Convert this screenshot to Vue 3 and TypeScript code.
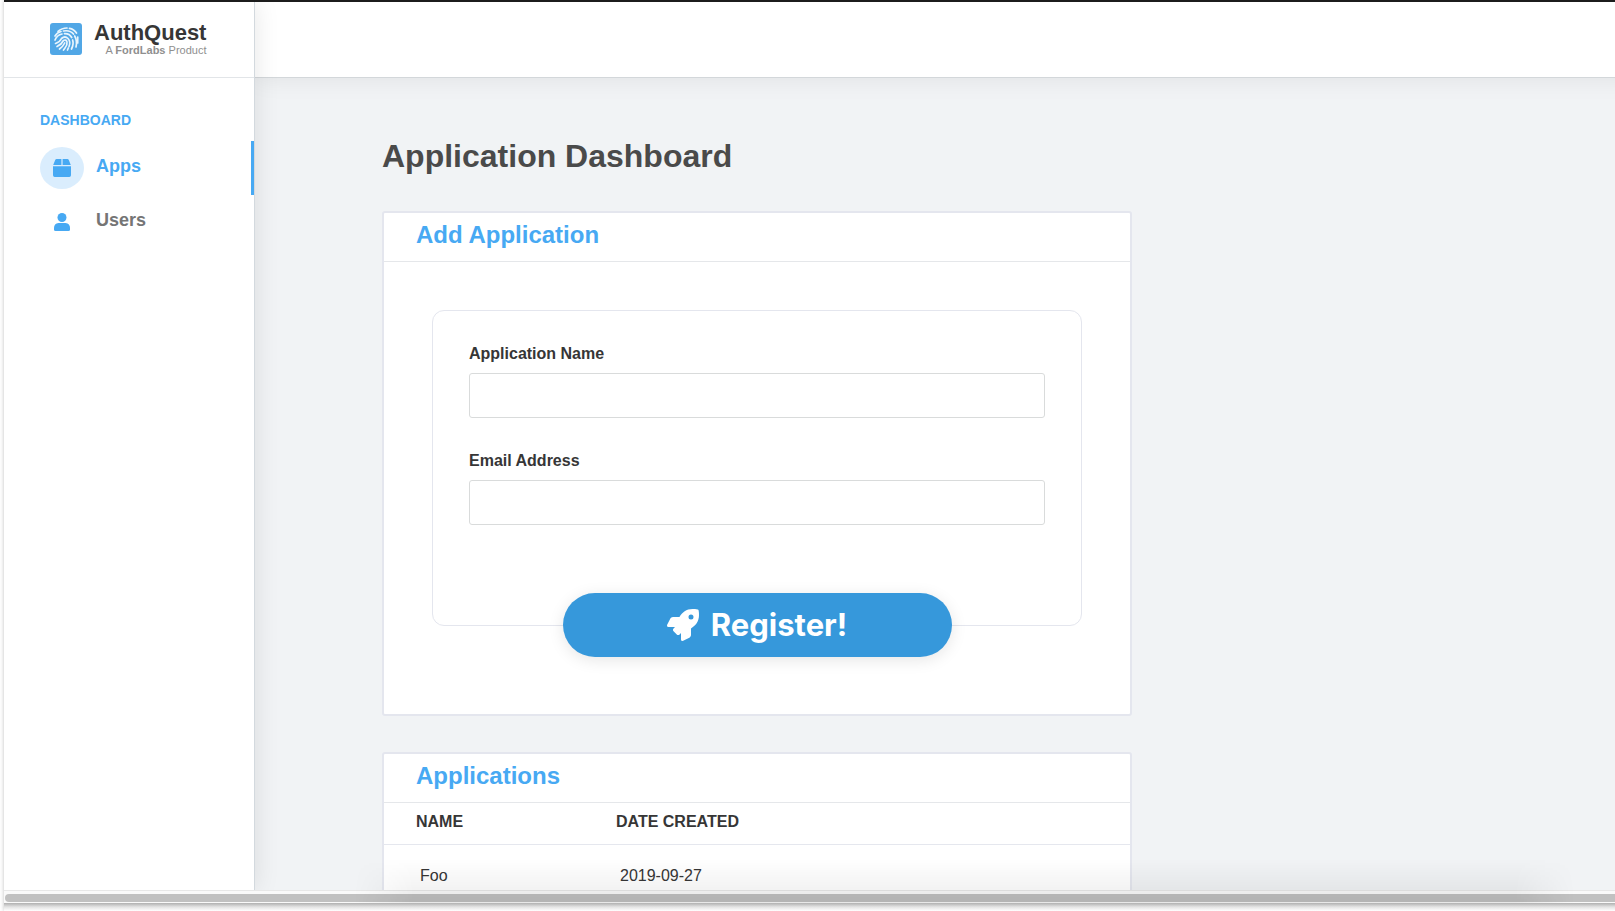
<script setup lang="ts">
import { ref } from 'vue'

interface Application {
  name: string
  created: string
}

const appName = ref('')
const email = ref('')
const applications = ref<Application[]>([{ name: 'Foo', created: '2019-09-27' }])

function register() {
  if (!appName.value) return
  applications.value.push({ name: appName.value, created: new Date().toISOString().slice(0, 10) })
  appName.value = ''
  email.value = ''
}
</script>

<template>
  <div class="window">
    <div class="page">
      <aside class="sidebar">
        <a class="brand" href="#">
          <svg class="logo" viewBox="0 0 32 32" aria-hidden="true">
            <rect width="32" height="32" rx="3" fill="#51a7e6" />
            <g fill="none" stroke="#e9f5fd" stroke-width="1.7" stroke-linecap="round">
              <path d="M8 8.500Q12 5 17 5M19.500 5.300Q24 6 26.500 10" />
              <path d="M5 13Q7 9.500 11 8.500M13.500 8Q20 6.800 23.500 11M24.700 13Q27.500 18 26 24" />
              <path d="M5 17Q7 12 12 11M14.500 10.700Q19.500 10.500 21.700 14.500M22.600 17Q24 21 21.500 26" />
              <path d="M5.500 20.500Q10 19 11.500 15.500Q15 12.500 18 15.500Q21 19 19 23.500M18.300 25L17.500 27" />
              <path d="M7 23.500Q11.500 21.500 13.500 17.500Q16 16 17 19Q17.500 22 15 25L13.500 27" />
              <path d="M9.500 26Q13 23.500 14.700 20M27.700 14V20" />
            </g>
          </svg>
          <span class="brand-text">
            <span class="brand-name">AuthQuest</span>
            <span class="brand-sub">A <b>FordLabs</b> Product</span>
          </span>
        </a>
        <nav class="nav">
          <h2 class="nav-title">DASHBOARD</h2>
          <a class="nav-item active" href="#apps">
            <span class="nav-icon">
              <svg viewBox="0 0 18 18" aria-hidden="true">
                <path d="M3.600 0H8.400V6H.200L2.200 1Q2.600 0 3.600 0ZM9.600 0H14.400Q15.400 0 15.800 1L17.800 6H9.600ZM0 7.200H18V16.200Q18 18 16.300 18H1.700Q0 18 0 16.200Z" />
              </svg>
            </span>
            <span class="nav-label">Apps</span>
          </a>
          <a class="nav-item" href="#users">
            <span class="nav-icon">
              <svg viewBox="0 0 18 18" aria-hidden="true">
                <circle cx="9" cy="4.500" r="4.500" />
                <path d="M5.500 10H12.500Q17 10.500 17 15V16.500Q17 18 15.500 18H2.500Q1 18 1 16.500V15Q1 10.500 5.500 10Z" />
              </svg>
            </span>
            <span class="nav-label">Users</span>
          </a>
        </nav>
      </aside>

      <div class="content">
        <header class="topbar"></header>
        <main class="main">
          <h1 class="title">Application Dashboard</h1>

          <section class="card">
            <h2 class="card-title">Add Application</h2>
            <form class="form" @submit.prevent="register">
              <label class="label" for="app-name">Application Name</label>
              <input id="app-name" v-model="appName" class="input" type="text" />
              <label class="label" for="email">Email Address</label>
              <input id="email" v-model="email" class="input" type="email" />
              <button class="register" type="submit">
                <svg class="rocket" viewBox="0 0 512 512" aria-hidden="true">
                  <path d="M505.120 19.090c-1.190-5.530-6.660-11-12.210-12.180C460.610 0 435.460 0 410.360 0c-103.300 0-165.200 55.200-211.300 128H94.900c-16.300 0-35.600 11.900-42.900 26.500L2.500 253.300A28.400 28.400 0 0 0 0 264a24 24 0 0 0 24 24h103.800l-22.500 22.500c-11.300 11.300-13 32.200 0 45.300l50.900 50.900c11.200 11.200 32.100 13.100 45.300 0l22.500-22.500V488a24 24 0 0 0 24 24 28.600 28.600 0 0 0 10.700-2.500l98.700-49.400c14.600-7.300 26.500-26.500 26.500-42.900V312.800c72.600-46.300 128-108.400 128-211.100.100-25.200.100-50.300-6.780-82.610zM384 168a40 40 0 1 1 0-80 40 40 0 0 1 0 80z" />
                </svg>
                Register!
              </button>
            </form>
          </section>

          <section class="card">
            <h2 class="card-title">Applications</h2>
            <table class="table">
              <thead>
                <tr>
                  <th scope="col">NAME</th>
                  <th scope="col">DATE CREATED</th>
                </tr>
              </thead>
              <tbody>
                <tr v-for="app in applications" :key="app.name">
                  <td>{{ app.name }}</td>
                  <td>{{ app.created }}</td>
                </tr>
              </tbody>
            </table>
          </section>
        </main>
      </div>
    </div>
    <div class="scroll-track"><div class="scroll-thumb"></div></div>
    <div class="edge-shadow"></div>
    <div class="bottom-shade"></div>
  </div>
</template>

<style>
body {
  background: #fff;
}
</style>

<style scoped>
* {
  box-sizing: border-box;
}

.window {
  position: relative;
  display: flex;
  flex-direction: column;
  height: 100vh;
  margin-left: 4px;
  border-top: 2px solid #1c1c1c;
  box-shadow: 0 0 4px rgba(0, 0, 0, 0.25);
  font-family: "Helvetica Neue", Helvetica, "Liberation Sans", Arial, sans-serif;
  color: #363636;
}

.page {
  flex: 1;
  min-height: 0;
  display: flex;
  overflow: hidden;
  background: #f1f3f5;
}

.sidebar {
  position: relative;
  z-index: 2;
  flex: none;
  width: 251px;
  background: #fff;
  border-right: 1px solid #d3d9de;
  box-shadow: 0 0 24px rgba(0, 0, 0, 0.1);
}

.brand {
  display: flex;
  gap: 12px;
  height: 76px;
  padding: 21px 44px 0 46px;
  border-bottom: 1px solid #e2e5e8;
  color: #363636;
  text-decoration: none;
}

.logo {
  flex: none;
  width: 32px;
  height: 32px;
}

.brand-text {
  display: flex;
  flex-direction: column;
  align-items: flex-end;
}

.brand-name {
  font-size: 22px;
  font-weight: 700;
  line-height: 20px;
}

.brand-sub {
  font-size: 11px;
  line-height: 14px;
  color: #8f8f8f;
}

.nav {
  padding-top: 33px;
}

.nav-title {
  margin: 0 0 12px;
  padding-left: 36px;
  font-size: 14px;
  line-height: 18px;
  color: #47a9f3;
}

.nav-item {
  display: flex;
  align-items: center;
  gap: 12px;
  height: 54px;
  padding-left: 36px;
  border-right: 3px solid transparent;
  font-size: 18px;
  font-weight: 700;
  color: #757575;
  text-decoration: none;
}

.nav-item.active {
  border-right-color: #47a9f3;
  color: #47a9f3;
}

.nav-label {
  padding-bottom: 3px;
}

.nav-icon {
  display: flex;
  align-items: center;
  justify-content: center;
  width: 44px;
  height: 42px;
  border-radius: 50%;
}

.active .nav-icon {
  background: #daedfd;
}

.nav-icon svg {
  width: 18px;
  height: 18px;
  fill: #47a9f3;
}

.content {
  flex: 1;
  min-width: 0;
}

.topbar {
  height: 76px;
  margin-right: -24px;
  background: #fff;
  border-bottom: 1px solid #d3d7da;
  box-shadow: 0 0 24px rgba(0, 0, 0, 0.08);
}

.main {
  display: flex;
  flex-direction: column;
  max-width: 877px;
  padding: 58px 0 0 127px;
}

.title {
  margin: 0 0 35px;
  font-size: 32px;
  line-height: 40px;
  color: #4a4a4a;
}

.card {
  margin-bottom: 36px;
  border: 2px solid #e4e6ee;
  border-radius: 3px;
  background: #fff;
}

.card-title {
  height: 49px;
  margin: 0;
  padding-left: 32px;
  border-bottom: 1px solid #e5e7ea;
  font-size: 24px;
  line-height: 44px;
  color: #47a9f3;
}

.form {
  display: flex;
  flex-direction: column;
  margin: 48px 48px 88px;
  padding: 32px 36px 0;
  border: 1px solid #e4e6ee;
  border-radius: 12px;
}

.label {
  margin-bottom: 8px;
  font-size: 16px;
  font-weight: 700;
  line-height: 22px;
}

.input {
  flex: none;
  height: 45px;
  margin: 0 0 32px;
  padding: 0 12px;
  border: 1px solid #d9dbdb;
  border-radius: 3px;
  background: #fff;
  font: inherit;
}

.register {
  display: flex;
  align-items: center;
  justify-content: center;
  align-self: center;
  gap: 12px;
  width: 100%;
  max-width: 389px;
  height: 64px;
  margin: 36px 0 -32px;
  border: 0;
  border-radius: 32px;
  background: #3698db;
  box-shadow: 0 3px 16px rgba(0, 0, 0, 0.1);
  font: 700 31px/40px Inter, sans-serif;
  color: #fff;
}

.rocket {
  width: 32px;
  height: 32px;
  fill: currentColor;
}

.table {
  width: 100%;
  border-spacing: 0;
  table-layout: fixed;
  font-size: 16px;
  line-height: 20px;
}

.table th,
.table td {
  text-align: left;
}

.table th {
  height: 42px;
  padding: 0 0 4px 32px;
  border-bottom: 1px solid #e5e7ee;
}

.table th:first-child {
  width: 200px;
}

.table td {
  padding: 21px 0 21px 36px;
}

.scroll-track {
  flex: none;
  height: 13px;
  padding: 3px 0 0 1px;
  border-top: 1px solid #e8e8e8;
  background: #fafafa;
}

.scroll-thumb {
  height: 8px;
  border-radius: 4px 0 0 4px;
  background: #c1c1c1;
}

.edge-shadow {
  flex: none;
  height: 8px;
  background: linear-gradient(#b0b0b0, #e4e4e4 50%, #fff);
}

.bottom-shade {
  position: absolute;
  z-index: 3;
  right: 0;
  bottom: 8px;
  left: 350px;
  height: 44px;
  background: linear-gradient(transparent, rgba(0, 0, 0, 0.07));
  mask-image: linear-gradient(90deg, transparent, #000 60px, #000 calc(100% - 100px), transparent calc(100% - 40px));
  pointer-events: none;
}
</style>
